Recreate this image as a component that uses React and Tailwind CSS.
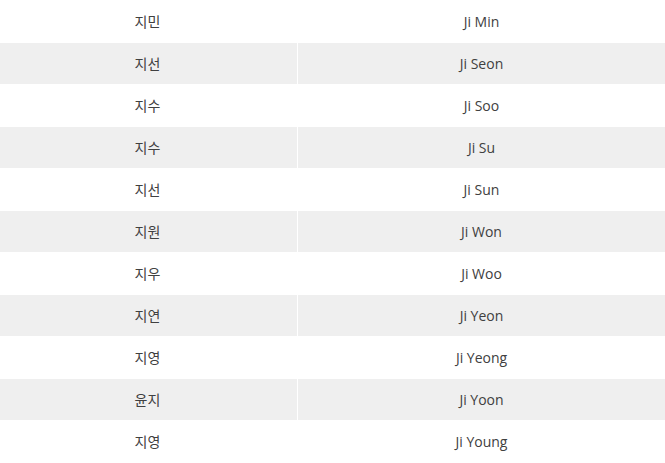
const rows = [
  ["지민", "Ji Min"],
  ["지선", "Ji Seon"],
  ["지수", "Ji Soo"],
  ["지수", "Ji Su"],
  ["지선", "Ji Sun"],
  ["지원", "Ji Won"],
  ["지우", "Ji Woo"],
  ["지연", "Ji Yeon"],
  ["지영", "Ji Yeong"],
  ["윤지", "Ji Yoon"],
  ["지영", "Ji Young"],
];

export default function App() {
  return (
    <div className="w-[665px] bg-white text-[14px] text-[#404040]" style={{ fontFamily: '"Open Sans", "Noto Sans CJK KR", sans-serif' }}>
      {rows.map(([ko, en], i) => (
        <div key={i} className="h-[42px] border-t border-white flex">
          <div className={`w-[298px] flex items-center justify-center border-r border-white pr-[2px] ${i % 2 === 1 ? "bg-[#efefef]" : "bg-white"}`}>{ko}</div>
          <div className={`flex-1 flex items-center justify-center ${i % 2 === 1 ? "bg-[#efefef]" : "bg-white"}`}>{en}</div>
        </div>
      ))}
    </div>
  );
}
